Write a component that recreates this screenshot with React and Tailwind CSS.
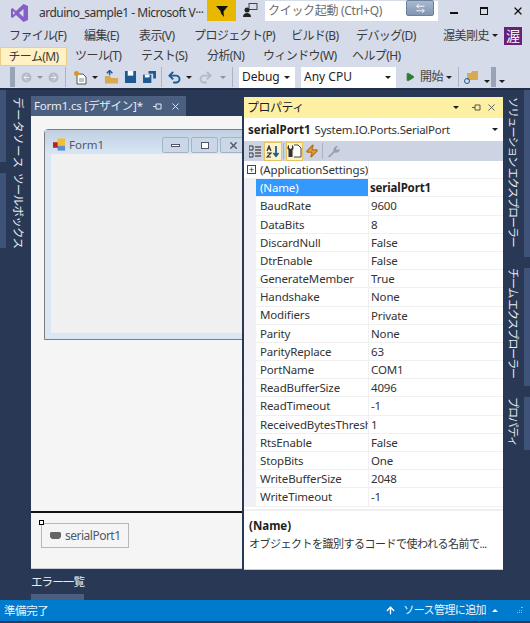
import React from 'react';
import { Play, X, ArrowUp, Undo2, Redo2, Zap, ArrowLeftRight } from 'lucide-react';

const menu1 = [['ファイル(F)', 75], ['編集(E)', 55], ['表示(V)', 55], ['プロジェクト(P)', 97], ['ビルド(B)', 65], ['デバッグ(D)', 80]];
const menu2 = [['ツール(T)', 66], ['テスト(S)', 66], ['分析(N)', 56], ['ウィンドウ(W)', 89], ['ヘルプ(H)', 60]];

const props = [
  ['BaudRate', '9600'], ['DataBits', '8'], ['DiscardNull', 'False'], ['DtrEnable', 'False'],
  ['GenerateMember', 'True'], ['Handshake', 'None'], ['Modifiers', 'Private'], ['Parity', 'None'],
  ['ParityReplace', '63'], ['PortName', 'COM1'], ['ReadBufferSize', '4096'], ['ReadTimeout', '-1'],
  ['ReceivedBytesThresh', '1'], ['RtsEnable', 'False'], ['StopBits', 'One'], ['WriteBufferSize', '2048'],
  ['WriteTimeout', '-1'],
];

const rightRail = [
  ['ソリューション エクスプローラー', 167, 7],
  ['チーム エクスプローラー', 118, 0],
  ['プロパティ', 53, 0],
];

function Caret({ className = '' }) {
  return <span className={`inline-block w-0 h-0 border-x-[3px] border-x-transparent border-t-[3px] border-t-[#1e1e1e] ${className}`} />;
}

function VsLogo() {
  return (
    <svg width="19" height="20" viewBox="0 0 19 20">
      <path d="M13.5 1 L18 3 V17 L13.5 19 L6 12 L2.5 15 L1 14 V6 L2.5 5 L6 8 Z M13.5 6 L9 10 L13.5 14 Z M3 8 V12 L5 10 Z" fill="#865fc5" fillRule="evenodd" />
    </svg>
  );
}

function Grip() {
  return <div className="w-[5px] h-[20px] bg-[radial-gradient(#99a3b8_1px,transparent_1px)] bg-[length:2px_2px]" />;
}

function Sep() {
  return <div className="w-px h-[20px] bg-[#aab2c5]" />;
}

function SaveIcon({ two }) {
  return (
    <svg width="13" height="12" viewBox="0 0 14 13">
      {two && <path d="M6 0h8v8h-3V3H6z" fill="#1b5a93" />}
      <path d={two ? 'M0 4h9v9H0z' : 'M1 0h12v13H1z'} fill="#1b5a93" />
      <path d={two ? 'M2 4h5v3H2z' : 'M4 0h6v5H4z'} fill="#fff" />
    </svg>
  );
}

function PropIcon() {
  return (
    <svg width="15" height="14" viewBox="0 0 15 14">
      <path d="M7 1h4l3 3v9H7" fill="#fff" stroke="#444" />
      <path d="M2 1v3l1.5 1L5 4V1c2 1 2 4 .5 5v7h-4V6C0 5 0 2 2 1z" fill="#333" />
    </svg>
  );
}

function FormBtn({ children, className = '' }) {
  return <div className={`h-[16px] rounded-[2px] border border-[#a4b4c8] bg-[#c9d7e7] flex items-center justify-center ${className}`}>{children}</div>;
}

export default function App() {
  return (
    <div className="w-[530px] h-[623px] overflow-hidden flex flex-col bg-[#d6dbe9] text-[11.5px] text-[#1e1e1e] font-['Noto_Sans','Noto_Sans_CJK_JP',sans-serif]">
      {/* title bar */}
      <div className="relative h-[25px] flex items-start shrink-0">
        <div className="ml-[10px] mt-[3px]"><VsLogo /></div>
        <div className="ml-[10px] mt-[4px] w-[168px] whitespace-nowrap text-[#333] text-[12px] tracking-[-0.5px]">arduino_sample1 - Microsoft V···</div>
        <div className="w-[29px] h-[21px] bg-[#e8b800] flex items-center justify-center">
          <svg width="12" height="12" viewBox="0 0 12 12"><path d="M0 1h12L7.5 6.5 8 12 5 8.5 4.5 6z" fill="#111" /></svg>
        </div>
        <div className="ml-[7px] mt-[3px]">
          <svg width="15" height="15" viewBox="0 0 15 15"><rect x="6" y="0.5" width="8" height="6" fill="none" stroke="#444" /><circle cx="4" cy="7" r="2.5" fill="#222" /><path d="M0 14c0-3 2-4 4-4s4 1 4 4z" fill="#222" /></svg>
        </div>
        <div className="ml-[7px] mt-[1px] w-[173px] h-[20px] bg-white pl-[3px] text-[#6d6d6d] text-[12px] leading-[20px] tracking-[-0.3px]">クイック起動 (Ctrl+Q)</div>
        <div className="absolute left-[406px] top-0 w-[28px] h-[16px] rounded-[2px] bg-gradient-to-b from-[#a9bad0] to-[#7f95b3] border border-[#6c7f9b] flex items-center justify-center">
          <ArrowLeftRight size={11} color="#fff" />
        </div>
        <div className="ml-[12px] mt-[12px] w-[8px] h-[2px] bg-[#111]" />
        <div className="ml-[22px] mt-[7px] w-[8px] h-[8px] border border-t-2 border-[#111]" />
        <X className="ml-[24px] mt-[5px]" size={12} color="#111" strokeWidth={2.5} />
      </div>

      {/* menus */}
      <div className="h-[21px] flex items-center shrink-0 pl-[9px] text-[12px] text-[#3a3a3a]">
        {menu1.map(([t, w]) => <div key={t} style={{ width: w }} className="whitespace-nowrap tracking-[-0.6px]">{t}</div>)}
        <div className="ml-[7px] whitespace-nowrap tracking-[-0.5px]">渥美剛史</div>
        <Caret className="ml-[3px]" />
        <div className="ml-[6px] w-[18px] h-[18px] bg-[#68217a] text-white text-[14px] leading-[18px] text-center">渥</div>
      </div>
      <div className="h-[20px] flex items-center shrink-0 text-[12px] text-[#3a3a3a]">
        <div className="w-[67px] h-[19px] bg-[#fff1c4] border border-[#e8cf85] text-center leading-[17px] tracking-[-0.6px] whitespace-nowrap">チーム(M)</div>
        <div className="w-[8px]" />
        {menu2.map(([t, w]) => <div key={t} style={{ width: w }} className="whitespace-nowrap tracking-[-0.6px]">{t}</div>)}
      </div>

      {/* toolbar */}
      <div className="h-[24px] flex items-center shrink-0 pl-[10px] border-b-2 border-[#1f2f4a]">
        <Grip />
        <svg className="ml-[6px]" width="11" height="11" viewBox="0 0 11 11"><circle cx="5.5" cy="5.5" r="5" fill="#b4bac6" /><path d="M6 2.5 3 5.5l3 3M3 5.5h5" stroke="#eef" fill="none" /></svg>
        <Caret className="ml-[5px] border-t-[#8d93a0]" />
        <svg className="ml-[5px]" width="11" height="11" viewBox="0 0 11 11"><circle cx="5.5" cy="5.5" r="5" fill="#b4bac6" /><path d="M5 2.5l3 3-3 3M8 5.5H3" stroke="#eef" fill="none" /></svg>
        <div className="ml-[6px]"><Sep /></div>
        <svg className="ml-[7px]" width="14" height="15" viewBox="0 0 14 15"><path d="M4 4h6l3 3v7H4z" fill="#fff" stroke="#555" /><path d="M6 9h5M6 11h5" stroke="#888" /><circle cx="3.5" cy="3.5" r="2.5" fill="#d8962c" /></svg>
        <Caret className="ml-[5px]" />
        <svg className="ml-[6px]" width="15" height="14" viewBox="0 0 16 14"><path d="M1 6h5l2 2h7v6H1z" fill="#d9a94f" /><path d="M6 0v5M3 3l3-3 3 3" stroke="#1b5a93" fill="none" strokeWidth="1.5" /></svg>
        <div className="w-[5px]" />
        <SaveIcon />
        <div className="w-[6px]" />
        <SaveIcon two />
        <div className="ml-[5px]"><Sep /></div>
        <Undo2 className="ml-[5px]" size={15} color="#1b5a93" strokeWidth={3} />
        <Caret className="ml-[4px]" />
        <Redo2 className="ml-[6px]" size={15} color="#b4bac6" strokeWidth={3} />
        <Caret className="ml-[7px] border-t-[#8d93a0]" />
        <div className="ml-[6px]"><Sep /></div>
        <div className="ml-[6px] w-[56px] h-[21px] bg-white flex items-center justify-between pl-[3px] pr-[5px] text-[12px]">Debug<Caret /></div>
        <div className="ml-[6px] w-[95px] h-[21px] bg-white flex items-center justify-between pl-[3px] pr-[5px] text-[12px]">Any CPU<Caret /></div>
        <Play className="ml-[9px]" size={10} color="#2e7d32" fill="#2e7d32" />
        <div className="ml-[5px] text-[12px] text-[#444] tracking-[-0.5px]">開始</div>
        <Caret className="ml-[3px]" />
        <div className="ml-[6px]"><Sep /></div>
        <svg className="ml-[5px]" width="14" height="13" viewBox="0 0 14 13"><path d="M3 2h4l1-2h6v9H3z" fill="#d9a94f" /><circle cx="3" cy="10" r="2.5" fill="none" stroke="#1b5a93" /></svg>
        <Caret className="ml-[6px] mt-[8px]" />
        <div className="ml-[1px]"><Grip /></div>
        <Caret className="ml-[3px] mt-[8px]" />
      </div>

      {/* workspace */}
      <div className="flex-1 min-h-0 flex bg-[#293955]">
        <div className="w-[31px] shrink-0 flex flex-col gap-[11px]">
          <div className="flex h-[72px]">
            <div className="w-[6px] bg-[#3f5378]" />
            <span className="ml-[2px] pt-[7px] [writing-mode:vertical-rl] [text-orientation:sideways] leading-[20px] text-[#e8ecf2] whitespace-nowrap tracking-[0.5px]">データソース</span>
          </div>
          <div className="flex h-[75px]">
            <div className="w-[6px] bg-[#3f5378]" />
            <span className="ml-[2px] [writing-mode:vertical-rl] [text-orientation:sideways] leading-[20px] text-[#e8ecf2] whitespace-nowrap tracking-[-0.7px]">ツールボックス</span>
          </div>
        </div>

        {/* designer */}
        <div className="w-[211px] shrink-0 flex flex-col">
          <div className="mt-[6px] w-[155px] h-[21px] bg-[#4b5f81] flex items-center pl-[3px] text-[#e8ecf2] whitespace-nowrap">
            <span className="w-[112px] tracking-[-0.2px]">Form1.cs [デザイン]*</span>
            <svg className="ml-[7px]" width="9" height="9" viewBox="0 0 9 9"><path d="M0 4.5h3M3 2v5h5V2z" fill="none" stroke="#e8ecf2" /></svg>
            <X className="ml-[8px]" size={11} color="#e8ecf2" strokeWidth={2} />
          </div>
          <div className="h-[397px] shrink-0 bg-[#f5f5f5] pt-[13px] pl-[13px] overflow-hidden border-b-2 border-b-[#111]">
            <div className="w-[230px] h-[211px] rounded-t-[4px] border border-[#7d7d7d] bg-[#d9e7f5] flex flex-col">
              <div className="h-[24px] shrink-0 bg-gradient-to-b from-[#c0d0e2] to-[#d8e6f4] flex items-center pl-[8px] pt-[5px] relative">
                <svg width="13" height="14" viewBox="0 0 14 14"><rect x="0" y="4" width="6" height="6" fill="#b22" /><rect x="5" y="0" width="8" height="8" fill="#f0c030" /><rect x="5" y="8" width="8" height="5" fill="#5a90d0" /></svg>
                <span className="ml-[3px] text-[#4f5a68]">Form1</span>
                <div className="absolute left-[117px] top-[7px] flex gap-[2px]">
                  <FormBtn className="w-[27px]"><div className="w-[9px] h-[3px] bg-[#fff] border border-[#556]" /></FormBtn>
                  <FormBtn className="w-[27px]"><div className="w-[8px] h-[7px] bg-[#fff] border border-[#556]" /></FormBtn>
                  <FormBtn className="w-[27px]"><X size={11} color="#556" strokeWidth={3} /></FormBtn>
                </div>
              </div>
              <div className="mx-[6px] mb-[6px] flex-1 bg-[#f0f0f0]" />
            </div>
          </div>
          <div className="relative h-[56px] shrink-0 bg-[#f5f5f5] pt-[10px] pl-[10px] border-b border-[#c6cbd6]">
            <div className="absolute left-[8px] top-[7px] w-[5px] h-[5px] bg-white border border-black" />
            <div className="w-[88px] h-[25px] border border-[#b8b8b8] flex items-center pl-[8px] text-[#4f5a68]">
              <svg width="11" height="7" viewBox="0 0 11 7"><path d="M1 0h9l1 1v4l-2 2H2L0 5V1z" fill="#666" /></svg>
              <span className="ml-[4px] text-[12px] tracking-[-0.5px]">serialPort1</span>
            </div>
          </div>
          <div className="mt-[4px] text-[#e8ecf2] tracking-[-0.9px] leading-[18px]">エラー一覧</div>
          <div className="mt-[3px] w-[53px] h-[6px] bg-[#4b5f81]" />
        </div>

        <div className="w-[2px] shrink-0" />

        {/* properties */}
        <div className="w-[259px] shrink-0 mt-[7px] h-[473px] bg-white flex flex-col border-b border-[#c6cbd6]">
          <div className="h-[21px] bg-[#fdf0a2] flex items-center pl-[3px] pr-[6px] shrink-0">
            <span className="text-[12px] tracking-[-0.5px]">プロパティ</span>
            <Caret className="ml-auto mr-[4px]" />
            <svg className="ml-[9px]" width="9" height="9" viewBox="0 0 9 9"><path d="M0 4.5h3M3 2v5h5V2z" fill="none" stroke="#555" /></svg>
            <X className="ml-[5px]" size={11} color="#555" strokeWidth={2} />
          </div>
          <div className="h-[23px] flex items-center pl-[4px] pr-[5px] shrink-0">
            <b>serialPort1</b>
            <span className="ml-[4px] tracking-[-0.25px] text-[#333]">System.IO.Ports.SerialPort</span>
            <Caret className="ml-auto" />
          </div>
          <div className="h-[20px] bg-[#ccd3e3] flex items-center pl-[5px] shrink-0">
            <svg width="13" height="13" viewBox="0 0 13 13"><path d="M0 1h4v4H0zM0 8h4v4H0z" fill="none" stroke="#333" /><path d="M6 1h6v2H6zM6 4h6v2H6zM6 7h6v2H6zM6 10h6v2H6z" fill="#777" /></svg>
            <div className="ml-[2px] w-[18px] h-[19px] bg-[#fdf1c7] border border-[#e5c365] flex items-center justify-center">
              <svg width="14" height="13" viewBox="0 0 14 13"><path d="M1 6 3 1l2 5M2 4h2M1 8h4L1 12h4" fill="none" stroke="#333" strokeWidth="1.2" /><path d="M10 1v9M7.5 8l2.500 3 2.500-3" fill="none" stroke="#1b5a93" strokeWidth="1.8" /></svg>
            </div>
            <div className="ml-[1px] w-px h-[16px] bg-[#aab2c5]" />
            <div className="ml-[2px] w-[17px] h-[19px] bg-[#fdf1c7] border border-[#e5c365] flex items-center justify-center"><PropIcon /></div>
            <Zap className="ml-[2px]" size={14} color="#b86f12" fill="#e6a23c" />
            <div className="w-px h-[16px] bg-[#aab2c5] ml-[3px]" />
            <svg className="ml-[4px]" width="13" height="13" viewBox="0 0 13 13"><path d="M1 11.500 6.500 6C6 3 8 1 11 1L9 3.500 10 5l3-1c0 3-3 4.500-5.500 3.500L2.500 12.500z" fill="#9aa0ab" /></svg>
          </div>
          <div className="flex-1 flex flex-col">
            <div className="h-[18.2px] shrink-0 flex items-center border-b border-[#f0f0f0]">
              <div className="w-[12px] h-full flex items-center justify-end">
                <div className="w-[9px] h-[9px] border border-[#444] text-[9px] leading-[7px] text-center">+</div>
              </div>
              <div className="w-[112px] pl-[4px] whitespace-nowrap overflow-hidden tracking-[-0.15px] text-[#333]">(ApplicationSettings)</div>
              <div className="border-l border-[#f0f0f0] h-full" />
            </div>
            <div className="h-[18.2px] shrink-0 flex items-center border-b border-[#f0f0f0]">
              <div className="w-[12px] h-full bg-[#f0f0f6]" />
              <div className="w-[112px] h-full bg-[#3399ff] text-white pl-[4px] leading-[18px] tracking-[-0.15px]">(Name)</div>
              <div className="pl-[2px] font-bold tracking-[-0.15px]">serialPort1</div>
            </div>
            {props.map(([k, v]) => (
              <div key={k} className="h-[18.2px] shrink-0 flex items-center border-b border-[#f0f0f0]">
                <div className="w-[12px] h-full bg-[#f0f0f6]" />
                <div className="w-[112px] pl-[4px] whitespace-nowrap overflow-hidden text-[#333] tracking-[-0.15px]">{k}</div>
                <div className="h-full border-l border-[#f0f0f0] pl-[2px] text-[#333] leading-[18px] tracking-[-0.15px]">{v}</div>
              </div>
            ))}
          </div>
          <div className="h-[60px] shrink-0 border-t-2 border-[#f0f0f0] pl-[5px] pt-[6px]">
            <div className="font-bold leading-[18px]">(Name)</div>
            <div className="text-[#333] text-[11px] leading-[18px] tracking-[-0.5px] whitespace-nowrap">オブジェクトを識別するコードで使われる名前で...</div>
          </div>
        </div>

        {/* right rail */}
        <div className="flex-1 flex flex-col gap-[11px] pr-[2px]">
          {rightRail.map(([t, h, top]) => (
            <div key={t} style={{ height: h, paddingTop: top }} className="flex justify-end">
              <span className="mr-[1px] [writing-mode:vertical-rl] [text-orientation:sideways] text-[11px] leading-[20px] text-[#e8ecf2] whitespace-nowrap tracking-[-1.1px]">{t}</span>
              <div className="w-[6px] bg-[#3f5378]" style={{ marginTop: -top }} />
            </div>
          ))}
        </div>
      </div>

      {/* status bar */}
      <div className="h-[21px] bg-[#007acc] flex items-center pl-[4px] pr-[7px] text-[#e8f3fb] shrink-0">
        <span className="tracking-[-0.4px]">準備完了</span>
        <ArrowUp className="ml-auto" size={11} color="#fff" strokeWidth={3} />
        <span className="ml-[7px] text-[11px] tracking-[-0.6px]">ソース管理に追加</span>
        <div className="ml-[6px] w-0 h-0 border-x-[3px] border-x-transparent border-b-[3px] border-b-white" />
        <svg className="ml-[18px]" width="7" height="7" viewBox="0 0 7 7"><path d="M5 0h2v1H5zM3 3h1v1H3zM5 3h1v1H5zM1 5h1v1H1zM3 5h1v1H3zM5 5h1v1H5z" fill="#7fbce6" /></svg>
      </div>
      <div className="h-[2px] bg-[#293955] shrink-0" />
    </div>
  );
}
